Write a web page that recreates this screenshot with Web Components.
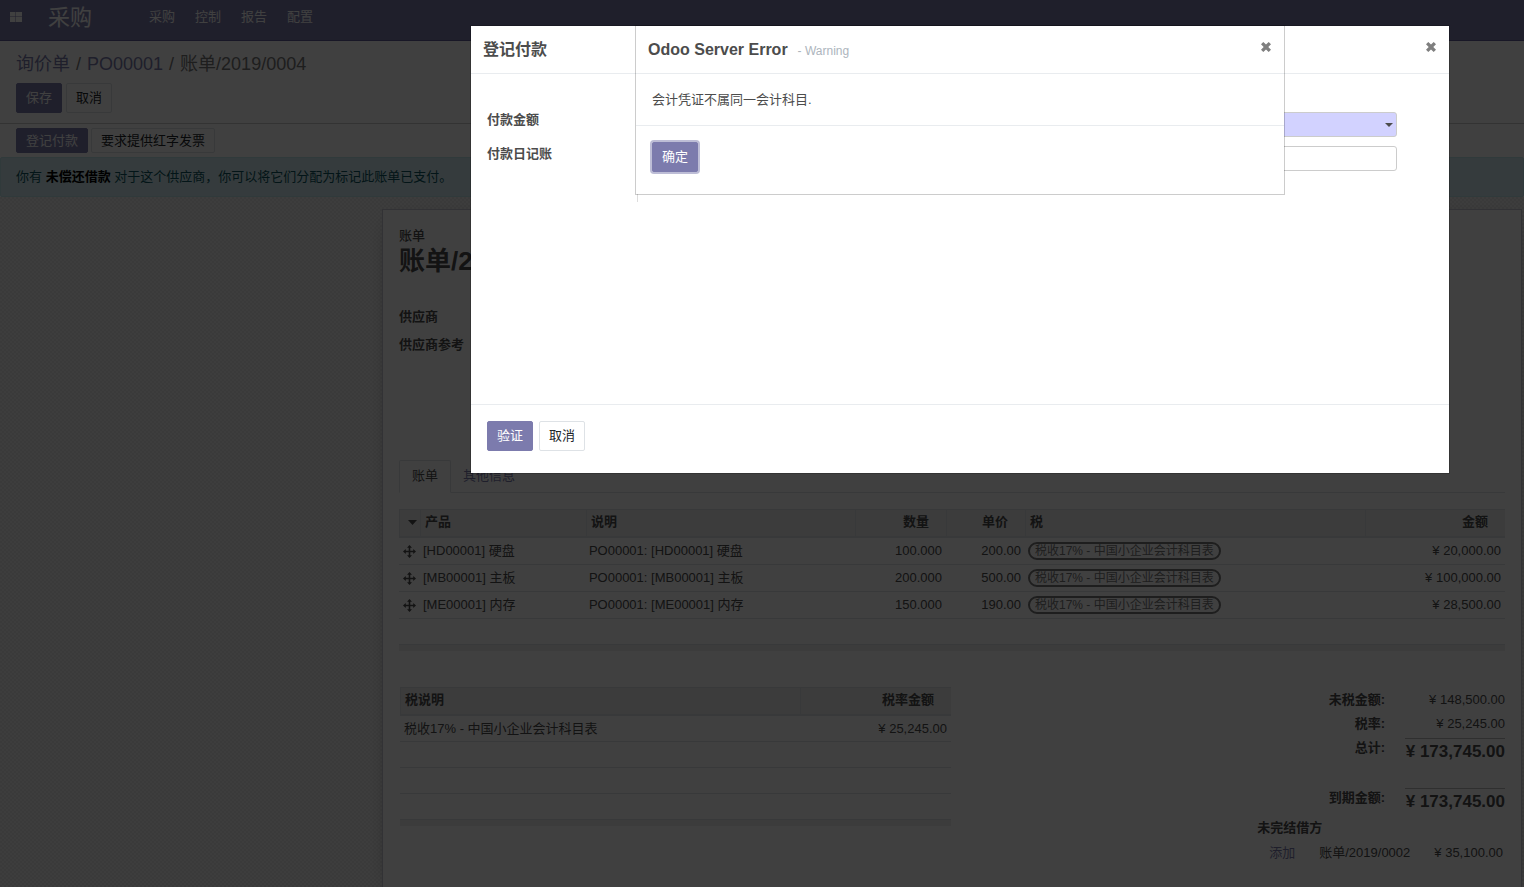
<!DOCTYPE html>
<html lang="zh-CN">
<head>
<meta charset="utf-8">
<title>账单/2019/0004</title>
<style>
    :root {
        --brand: #7c7bad;
        --text: #4c4c4c;
        --line: #dee2e6;
    }

    body {
        margin: 0;
        background: #fff;
        color: var(--text);
        font-family: "Liberation Sans", "Noto Sans CJK SC", sans-serif;
        font-size: 13px;
        line-height: 20px;
    }
</style>
</head>
<body>
<invoice-page></invoice-page>

<modal-backdrop></modal-backdrop>

<modal-dialog size="large">
    <span slot="title">登记付款</span>
    <payment-form></payment-form>
    <o-button slot="footer" variant="primary">验证</o-button>
    <o-button slot="footer">取消</o-button>
</modal-dialog>

<modal-dialog size="medium">
    <span slot="title">Odoo Server Error</span>
    <span slot="subtitle">- Warning</span>
    会计凭证不属同一会计科目.
    <o-button slot="footer" variant="primary" focused>确定</o-button>
</modal-dialog>

<script>
    function attach(el, html) {
        el.attachShadow({ mode: 'open' })
        el.shadowRoot.innerHTML = `<style>* { box-sizing: border-box; }</style>` + html
    }

    class OButton extends HTMLElement {
        constructor() {
            super()
            attach(this, `
            <style>
                :host {
                    display: inline-block;
                }

                button {
                    display: block;
                    height: var(--button-height, 30px);
                    padding: 0 9px;
                    border: 1px solid var(--line);
                    border-radius: 2px;
                    background: #fff;
                    color: #212529;
                    font: inherit;
                    line-height: 20px;
                    white-space: nowrap;
                }

                :host([variant=primary]) button {
                    border-color: var(--brand);
                    background: var(--brand);
                    color: #fff;
                }

                :host([focused]) button {
                    box-shadow: 0 0 0 2px rgba(124, 123, 173, 0.5);
                }
            </style>
            <button type="button"><slot></slot></button>
        `)
        }
    }

    class AppNavbar extends HTMLElement {
        constructor() {
            super()
            attach(this, `
            <style>
                :host {
                    display: block;
                    background: var(--brand);
                    border-bottom: 1px solid #5f5e97;
                }

                nav {
                    display: flex;
                    height: 40px;
                    padding-left: 10px;
                    color: #fff;
                }

                a {
                    color: inherit;
                    text-decoration: none;
                    padding: 7px 10px;
                }

                a.apps {
                    padding: 12px 0;
                    width: 28px;
                }

                a.apps svg {
                    display: block;
                }

                a.brand {
                    width: 101px;
                    padding-top: 8px;
                    font-size: 22px;
                }
            </style>
            <nav>
                <a class="apps" href="#" aria-label="应用">
                    <svg width="12" height="10" viewBox="0 0 12 10" fill="#fff">
                        <rect width="5.500" height="4.500" x="0" y="0"/>
                        <rect width="6" height="4.500" x="6" y="0"/>
                        <rect width="5.500" height="5" x="0" y="5"/>
                        <rect width="6" height="5" x="6" y="5"/>
                    </svg>
                </a>
                <a class="brand" href="#">采购</a>
                <a href="#">采购</a>
                <a href="#">控制</a>
                <a href="#">报告</a>
                <a href="#">配置</a>
            </nav>
        `)
        }
    }

    class ControlPanel extends HTMLElement {
        constructor() {
            super()
            attach(this, `
            <style>
                :host {
                    display: block;
                    padding: 9px 16px 10px;
                    border-bottom: 1px solid #ccc;
                }

                .breadcrumb {
                    display: flex;
                    gap: 6px;
                    height: 33px;
                    font-size: 18px;
                    line-height: 28px;
                    color: #777;
                }

                a {
                    color: var(--brand);
                    text-decoration: none;
                }

                .buttons {
                    display: flex;
                    gap: 4px;
                }
            </style>
            <div class="breadcrumb">
                <a href="#">询价单</a><span>/</span><a href="#">PO00001</a><span>/</span><span>账单/2019/0004</span>
            </div>
            <div class="buttons">
                <o-button variant="primary">保存</o-button>
                <o-button>取消</o-button>
            </div>
        `)
        }
    }

    class StatusBar extends HTMLElement {
        constructor() {
            super()
            attach(this, `
            <style>
                :host {
                    display: flex;
                    gap: 3px;
                    padding: 4px 16px;
                    --button-height: 25px;
                }
            </style>
            <o-button variant="primary">登记付款</o-button>
            <o-button>要求提供红字发票</o-button>
        `)
        }
    }

    class InfoAlert extends HTMLElement {
        constructor() {
            super()
            attach(this, `
            <style>
                :host {
                    display: block;
                    padding: 9px 15px;
                    border: 1px solid #bee5eb;
                    border-radius: 2px;
                    background: #d1ecf1;
                    color: #0c5460;
                }

                ::slotted(b) {
                    color: #000;
                }
            </style>
            <slot></slot>
        `)
        }
    }

    const TABLE_STYLE = `
        :host {
            display: block;
        }

        table {
            width: 100%;
            table-layout: fixed;
            border-collapse: separate;
            border-spacing: 0;
        }

        th {
            height: 29px;
            padding: 0 4px 2px;
            border: 1px solid var(--line);
            border-width: 1px 0 2px 1px;
            background: #eee;
            text-align: left;
            line-height: 20px;
        }

        td {
            height: 27px;
            padding: 0 4px;
            border-bottom: 1px solid var(--line);
            line-height: 20px;
            white-space: nowrap;
        }

        th.number {
            padding-right: 17px;
            text-align: right;
        }

        td.number {
            text-align: right;
        }

        td.empty {
            height: 26px;
        }

        tfoot td {
            height: 6px;
            padding: 0;
            background: #eee;
            border: 0;
        }
    `

    const MOVE_ICON = `
        <svg width="13" height="13" viewBox="0 0 13 13" fill="#4c4c4c">
            <path d="M6.500 0 L9 2.800 H7.300 V5.700 H10.200 V4 L13 6.500 L10.200 9 V7.300 H7.300 V10.200 H9 L6.500 13 L4 10.200 H5.700 V7.300 H2.800 V9 L0 6.500 L2.800 4 V5.700 H5.700 V2.800 H4 Z"/>
        </svg>
    `

    const TAX = '税收17% - 中国小企业会计科目表'

    const LINES = [
        { code: 'HD00001', name: '硬盘', qty: '100.000', price: '200.00', total: '20,000.00' },
        { code: 'MB00001', name: '主板', qty: '200.000', price: '500.00', total: '100,000.00' },
        { code: 'ME00001', name: '内存', qty: '150.000', price: '190.00', total: '28,500.00' }
    ]

    class InvoiceLines extends HTMLElement {
        constructor() {
            super()
            const rows = LINES.map(line => `
                <tr>
                    <td class="handle">${MOVE_ICON}</td>
                    <td class="product">[${line.code}] ${line.name}</td>
                    <td class="product">PO00001: [${line.code}] ${line.name}</td>
                    <td class="number">${line.qty}</td>
                    <td class="number">${line.price}</td>
                    <td class="product"><span class="tag">${TAX}</span></td>
                    <td class="number">¥ ${line.total}</td>
                </tr>
            `).join('')

            attach(this, `
            <style>
                ${TABLE_STYLE}

                svg {
                    display: block;
                }

                th.handle {
                    padding-left: 8px;
                }

                td.product {
                    padding-left: 3px;
                }

                .tag {
                    display: block;
                    width: max-content;
                    height: 18px;
                    padding: 0 5px;
                    border: 2px solid #777;
                    border-radius: 9px;
                    font-size: 12px;
                    line-height: 15px;
                    color: #777;
                }
            </style>
            <table>
                <colgroup>
                    <col style="width: 21px">
                    <col style="width: 15%">
                    <col>
                    <col style="width: 91px">
                    <col style="width: 79px">
                    <col style="width: 340px">
                    <col style="width: 140px">
                </colgroup>
                <thead>
                    <tr>
                        <th class="handle"><svg width="9" height="5" viewBox="0 0 9 5" fill="#4c4c4c"><path d="M0 0 H9 L4.500 5 Z"/></svg></th>
                        <th>产品</th>
                        <th>说明</th>
                        <th class="number">数量</th>
                        <th class="number">单价</th>
                        <th>税</th>
                        <th class="number">金额</th>
                    </tr>
                </thead>
                <tbody>
                    ${rows}
                    <tr><td class="empty" colspan="7"></td></tr>
                </tbody>
                <tfoot><tr><td colspan="7"></td></tr></tfoot>
            </table>
        `)
        }
    }

    class TaxLines extends HTMLElement {
        constructor() {
            super()
            attach(this, `
            <style>
                ${TABLE_STYLE}

                tbody td {
                    height: 26px;
                }
            </style>
            <table>
                <colgroup><col><col style="width: 151px"></colgroup>
                <thead>
                    <tr><th>税说明</th><th class="number">税率金额</th></tr>
                </thead>
                <tbody>
                    <tr><td>${TAX}</td><td class="number">¥ 25,245.00</td></tr>
                    <tr><td colspan="2"></td></tr>
                    <tr><td colspan="2"></td></tr>
                    <tr><td colspan="2"></td></tr>
                </tbody>
                <tfoot><tr><td colspan="2"></td></tr></tfoot>
            </table>
        `)
        }
    }

    class InvoiceTotals extends HTMLElement {
        constructor() {
            super()
            attach(this, `
            <style>
                :host {
                    display: block;
                }

                dl {
                    display: grid;
                    grid-template-columns: auto 100px;
                    column-gap: 20px;
                    justify-content: end;
                    margin: 0;
                    text-align: right;
                }

                dt {
                    font-weight: bold;
                }

                dt, dd {
                    margin: 0;
                    min-height: 24px;
                    padding-top: 3px;
                    white-space: nowrap;
                }

                dd.total {
                    min-height: 47px;
                    margin-top: 3px;
                    padding-top: 1px;
                    border-top: 1px solid #bbb;
                    font-size: 17px;
                    line-height: 24px;
                    font-weight: bold;
                }

                dd.due {
                    min-height: 30px;
                }

                .outstanding {
                    display: grid;
                    grid-template-columns: auto auto auto;
                    justify-content: end;
                    column-gap: 24px;
                    row-gap: 5px;
                    padding-right: 2px;
                }

                strong {
                    grid-column: 1 / -1;
                }

                .outstanding a {
                    padding-left: 12px;
                    color: var(--brand);
                    text-decoration: none;
                }
            </style>
            <dl>
                <dt>未税金额:</dt><dd>¥ 148,500.00</dd>
                <dt>税率:</dt><dd>¥ 25,245.00</dd>
                <dt>总计:</dt><dd class="total">¥ 173,745.00</dd>
                <dt>到期金额:</dt><dd class="total due">¥ 173,745.00</dd>
            </dl>
            <div class="outstanding">
                <strong>未完结借方</strong>
                <a href="#">添加</a><span>账单/2019/0002</span><span>¥ 35,100.00</span>
            </div>
        `)
        }
    }

    class InvoiceSheet extends HTMLElement {
        constructor() {
            super()
            attach(this, `
            <style>
                :host {
                    display: block;
                    flex: 1;
                    max-width: 1140px;
                    padding: 16px 16px 20px;
                    border: 1px solid #c8c8d3;
                    border-bottom: 0;
                    background: #fff;
                    box-shadow: 0 5px 20px -15px #000;
                }

                .kind {
                    font-weight: 500;
                }

                h1 {
                    margin: 0 0 31px;
                    font-size: 26px;
                    line-height: 30px;
                }

                .fields {
                    display: grid;
                    grid-auto-rows: 28px;
                    height: 153px;
                    font-weight: bold;
                }

                .tabs {
                    display: flex;
                    height: 33px;
                    margin-bottom: 16px;
                    border-bottom: 1px solid var(--line);
                }

                .tabs a {
                    height: 33px;
                    padding: 6px 12px;
                    color: var(--brand);
                    text-decoration: none;
                }

                .tabs a.active {
                    padding: 5px 12px;
                    border: 1px solid var(--line);
                    border-bottom-color: #fff;
                    border-radius: 2px 2px 0 0;
                    color: var(--text);
                }

                .bottom {
                    display: grid;
                    grid-template-columns: 1fr 1fr;
                    margin-top: 36px;
                }

                tax-lines {
                    min-width: 0;
                    margin: 0 1px;
                }
            </style>
            <div class="kind">账单</div>
            <h1>账单/2019/0004</h1>
            <div class="fields">
                <div>供应商</div>
                <div>供应商参考</div>
            </div>
            <div class="tabs">
                <a class="active" href="#">账单</a>
                <a href="#">其他信息</a>
            </div>
            <invoice-lines></invoice-lines>
            <div class="bottom">
                <tax-lines></tax-lines>
                <invoice-totals></invoice-totals>
            </div>
        `)
        }
    }

    class InvoicePage extends HTMLElement {
        constructor() {
            super()
            attach(this, `
            <style>
                :host {
                    display: flex;
                    flex-direction: column;
                    height: 100vh;
                    overflow: hidden;
                }

                .sheet-bg {
                    display: flex;
                    justify-content: center;
                    flex: 1;
                    padding: 12px 0 0 380px;
                    background: #e6e6e6 conic-gradient(#f2f2f2 25%, #e6e6e6 0 50%, #f2f2f2 0 75%, #e6e6e6 0) 0 0 / 4px 4px;
                }
            </style>
            <app-navbar></app-navbar>
            <control-panel></control-panel>
            <status-bar></status-bar>
            <info-alert>你有 <b>未偿还借款</b> 对于这个供应商，你可以将它们分配为标记此账单已支付。</info-alert>
            <div class="sheet-bg"><invoice-sheet></invoice-sheet></div>
        `)
        }
    }

    class ModalBackdrop extends HTMLElement {
        constructor() {
            super()
            attach(this, `
            <style>
                :host {
                    position: fixed;
                    inset: 0;
                    background: rgba(0, 0, 0, 0.75);
                }
            </style>
        `)
        }
    }

    class ModalDialog extends HTMLElement {
        constructor() {
            super()
            attach(this, `
            <style>
                :host {
                    position: fixed;
                    inset: 0;
                    display: flex;
                    justify-content: center;
                    align-items: flex-start;
                    padding: 25px 0 0 396px;
                }

                .content {
                    width: 100%;
                    max-width: 650px;
                    border: 1px solid rgba(0, 0, 0, 0.2);
                    background: #fff;
                    background-clip: padding-box;
                }

                :host([size=large]) .content {
                    max-width: 980px;
                }

                header {
                    display: flex;
                    align-items: baseline;
                    gap: 10px;
                    height: 48px;
                    padding: 12px;
                    border-bottom: 1px solid #e9ecef;
                }

                h4 {
                    margin: 0;
                    font-size: 16px;
                    line-height: 24px;
                }

                small {
                    font-size: 12px;
                    color: #adb5bd;
                }

                header button {
                    align-self: start;
                    margin-left: auto;
                    padding: 3px 0;
                    border: 0;
                    background: none;
                }

                svg {
                    display: block;
                }

                main {
                    padding: 16px;
                    line-height: 19px;
                }

                :host([size=large]) main {
                    min-height: 330px;
                }

                footer {
                    display: flex;
                    gap: 6px;
                    min-height: 69px;
                    padding: 16px;
                    border-top: 1px solid #e9ecef;
                }
            </style>
            <div class="content" role="dialog">
                <header>
                    <h4><slot name="title"></slot></h4>
                    <small><slot name="subtitle"></slot></small>
                    <button type="button" aria-label="关闭">
                        <svg width="12" height="12" viewBox="0 0 12 12" fill="#7f7f7f">
                            <path d="M3.300 1 L6 3.600 L8.700 1 L11 3.200 L8.300 6 L11 8.800 L8.700 11 L6 8.400 L3.300 11 L1 8.800 L3.700 6 L1 3.200 Z"/>
                        </svg>
                    </button>
                </header>
                <main><slot></slot></main>
                <footer><slot name="footer"></slot></footer>
            </div>
        `)
        }
    }

    class PaymentForm extends HTMLElement {
        constructor() {
            super()
            attach(this, `
            <style>
                :host {
                    display: grid;
                    grid-template-columns: 151px 1fr;
                    margin: 16px 36px 0 0;
                    line-height: 20px;
                }

                .cell {
                    height: 34px;
                    padding: 4px 0;
                }

                .label {
                    border-right: 1px solid #ddd;
                    font-weight: bold;
                }

                .end {
                    height: 28px;
                }

                .field {
                    padding: 6px 0 0 8px;
                }

                select, input {
                    display: block;
                    width: 100%;
                    height: 25px;
                    border: 1px solid #ccc;
                    border-radius: 3px;
                    background: #fff;
                    font: inherit;
                    color: inherit;
                }

                select {
                    appearance: none;
                    background: #d2d2ff url("data:image/svg+xml,%3Csvg xmlns='http://www.w3.org/2000/svg' width='8' height='4'%3E%3Cpath d='M0 0h8L4 4z' fill='%234c4c4c'/%3E%3C/svg%3E") no-repeat right 3px center;
                }
            </style>
            <div class="cell label"><label for="amount">付款金额</label></div>
            <div class="cell field"><select id="amount"></select></div>
            <div class="cell label"><label for="journal">付款日记账</label></div>
            <div class="cell field"><input id="journal" type="text"></div>
            <div class="label end"></div>
        `)
        }
    }

    window.customElements.define('o-button', OButton)
    window.customElements.define('app-navbar', AppNavbar)
    window.customElements.define('control-panel', ControlPanel)
    window.customElements.define('status-bar', StatusBar)
    window.customElements.define('info-alert', InfoAlert)
    window.customElements.define('invoice-lines', InvoiceLines)
    window.customElements.define('tax-lines', TaxLines)
    window.customElements.define('invoice-totals', InvoiceTotals)
    window.customElements.define('invoice-sheet', InvoiceSheet)
    window.customElements.define('invoice-page', InvoicePage)
    window.customElements.define('modal-backdrop', ModalBackdrop)
    window.customElements.define('modal-dialog', ModalDialog)
    window.customElements.define('payment-form', PaymentForm)
</script>
</body>
</html>
